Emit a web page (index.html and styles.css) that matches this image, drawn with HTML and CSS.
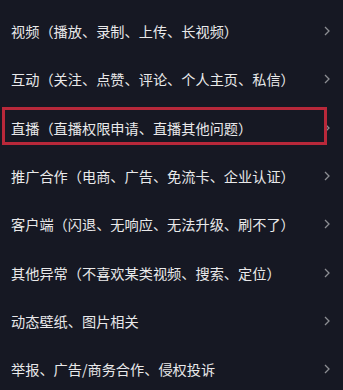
FILE: index.html
```html
<!DOCTYPE html>
<html lang="zh-CN">
<head>
<meta charset="utf-8">
<link rel="stylesheet" href="styles.css">
</head>
<body>
<ul class="list">
  <li class="row"><span class="label">视频（播放、录制、上传、长视频）</span><svg class="chev" viewBox="0 0 6 10"><polyline points="1,1 5,5 1,9"/></svg></li>
  <li class="row"><span class="label">互动（关注、点赞、评论、个人主页、私信）</span><svg class="chev" viewBox="0 0 6 10"><polyline points="1,1 5,5 1,9"/></svg></li>
  <li class="row highlight"><span class="label">直播（直播权限申请、直播其他问题）</span><svg class="chev" viewBox="0 0 6 10"><polyline points="1,1 5,5 1,9"/></svg></li>
  <li class="row"><span class="label">推广合作（电商、广告、免流卡、企业认证）</span><svg class="chev" viewBox="0 0 6 10"><polyline points="1,1 5,5 1,9"/></svg></li>
  <li class="row"><span class="label">客户端（闪退、无响应、无法升级、刷不了）</span><svg class="chev" viewBox="0 0 6 10"><polyline points="1,1 5,5 1,9"/></svg></li>
  <li class="row"><span class="label">其他异常（不喜欢某类视频、搜索、定位）</span><svg class="chev" viewBox="0 0 6 10"><polyline points="1,1 5,5 1,9"/></svg></li>
  <li class="row"><span class="label">动态壁纸、图片相关</span><svg class="chev" viewBox="0 0 6 10"><polyline points="1,1 5,5 1,9"/></svg></li>
  <li class="row"><span class="label">举报、广告/商务合作、侵权投诉</span><svg class="chev" viewBox="0 0 6 10"><polyline points="1,1 5,5 1,9"/></svg></li>
</ul>
</body>
</html>
```
FILE: styles.css
```css
html, body {
  margin: 0;
  padding: 0;
  background: #161823;
}
body {
  width: 343px;
  height: 390px;
  overflow: hidden;
  font-family: "Noto Sans CJK SC", sans-serif;
}
.list {
  list-style: none;
  margin: 0;
  padding: 7px 0 0 0;
}
.row {
  position: relative;
  height: 48.3px;
  display: flex;
  align-items: center;
  justify-content: space-between;
  padding: 0 13px 0 11px;
}
.label {
  color: #e9e9ea;
  font-size: 14.2px;
  line-height: 20px;
  white-space: nowrap;
}
.chev {
  width: 6px;
  height: 10px;
  flex: none;
}
.chev polyline {
  fill: none;
  stroke: #8c8d93;
  stroke-width: 1.3;
}
.highlight::after {
  content: "";
  position: absolute;
  left: 2px;
  top: 3px;
  width: 325px;
  height: 38px;
  box-sizing: border-box;
  border: 3px solid #b8283a;
}
```
